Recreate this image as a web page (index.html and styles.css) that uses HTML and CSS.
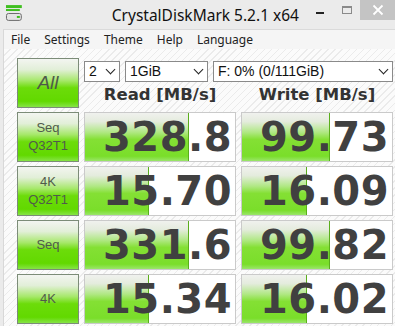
FILE: index.html
```html
<!DOCTYPE html>
<html lang="en">
<head>
    <meta charset="UTF-8">
    <title>CrystalDiskMark 5.2.1 x64</title>
    <link rel="stylesheet" href="styles.css">
</head>
<body>
    <div id="window">
        <div id="title-bar">
            <svg class="app-icon" width="18" height="18" viewBox="0 0 18 18">
                <rect x="1" y="1" width="16" height="3" fill="#3fbf1f"/>
                <rect x="1" y="5" width="14" height="2" fill="#3fbf1f"/>
                <rect x="1.5" y="9.5" width="15" height="7" rx="2" fill="#e4e4e4" stroke="#6b6b6b"/>
                <rect x="12" y="12" width="3" height="2" fill="#3fbf1f"/>
            </svg>
            <div class="title">CrystalDiskMark 5.2.1 x64</div>
            <div class="caption-btn min-btn"><span></span></div>
            <div class="caption-btn max-btn"><span></span></div>
            <div class="caption-btn close-btn">
                <svg width="12" height="12" viewBox="0 0 12 12">
                    <path d="M1.5 1.5 L10.5 10.5 M10.5 1.5 L1.5 10.5" stroke="#fff" stroke-width="1.8"/>
                </svg>
            </div>
        </div>

        <div id="client">
            <div id="menu-bar">
                <span class="menu-item">File</span>
                <span class="menu-item">Settings</span>
                <span class="menu-item">Theme</span>
                <span class="menu-item">Help</span>
                <span class="menu-item">Language</span>
            </div>

            <div id="main">
                <div class="bench-grid">
                    <div class="label-btn all-btn">All</div>
                    <div class="controls">
                        <div class="select-row">
                            <div class="select sel-count">2<i class="chev"></i></div>
                            <div class="select sel-size">1GiB<i class="chev"></i></div>
                            <div class="select sel-drive">F: 0% (0/111GiB)<i class="chev"></i></div>
                        </div>
                        <div class="header-row">
                            <div class="col-head">Read [MB/s]</div>
                            <div class="col-head">Write [MB/s]</div>
                        </div>
                    </div>
                    <!-- rows are filled in by script -->
                </div>
            </div>
        </div>
    </div>

    <script>
        const results = [
            { name: ['Seq', 'Q32T1'], read: '328.8', readBar: 104, write: '99.73', writeBar: 88 },
            { name: ['4K', 'Q32T1'], read: '15.70', readBar: 64, write: '16.09', writeBar: 65 },
            { name: ['Seq'], read: '331.6', readBar: 104, write: '99.82', writeBar: 88 },
            { name: ['4K'], read: '15.34', readBar: 64, write: '16.02', writeBar: 65 }
        ];

        function makeValueBox(text, barWidth) {
            const box = document.createElement('div');
            box.classList.add('value-box');
            const bar = document.createElement('div');
            bar.classList.add('value-bar');
            bar.style.width = barWidth + 'px';
            const num = document.createElement('span');
            num.classList.add('value-text');
            num.textContent = text;
            box.appendChild(bar);
            box.appendChild(num);
            return box;
        }

        function buildRows() {
            const grid = document.querySelector('.bench-grid');
            results.forEach(r => {
                const label = document.createElement('div');
                label.classList.add('label-btn');
                label.innerHTML = r.name.join('<br>');
                grid.appendChild(label);
                grid.appendChild(makeValueBox(r.read, r.readBar));
                grid.appendChild(makeValueBox(r.write, r.writeBar));
            });
        }

        buildRows();
    </script>
</body>
</html>
```

FILE: styles.css
```css
body {
    margin: 0;
    width: 395px;
    height: 326px;
    overflow: hidden;
    font-family: "Noto Sans", "DejaVu Sans", sans-serif;
}
#window {
    height: 100%;
    background-color: #ebebeb;
    display: flex;
    flex-direction: column;
}
#title-bar {
    height: 29px;
    display: flex;
    align-items: flex-start;
    position: relative;
}
.app-icon {
    margin: 4px 0 0 5px;
}
.title {
    font-size: 15.5px;
    color: #111;
    margin: 4px 0 0 89px;
    white-space: nowrap;
}
.caption-btn {
    height: 20px;
    display: flex;
    align-items: center;
    justify-content: center;
}
.min-btn {
    width: 27px;
    margin-left: 8px;
}
.min-btn span {
    display: block;
    width: 8px;
    height: 2px;
    margin-top: 5px;
    background-color: #222;
}
.max-btn {
    width: 27px;
}
.max-btn span {
    display: block;
    width: 8px;
    height: 5px;
    margin-top: -1px;
    border: 1px solid #8a8a8a;
    border-top-width: 2px;
}
.close-btn {
    width: 35px;
    margin-left: auto;
    background-color: #c4c4c4;
}
#client {
    flex: 1;
    margin-left: 3px;
    border-left: 1px solid #d8d8d8;
    border-top: 1px solid #dadada;
    display: flex;
    flex-direction: column;
}
#menu-bar {
    height: 19px;
    background-color: #f5f5f5;
    display: flex;
    align-items: center;
    font-size: 12px;
    color: #222;
    padding-left: 7px;
}
.menu-item {
    margin-right: 14px;
}
#main {
    flex: 1;
    padding: 9px 0 0 13px;
    background-color: #fbfbfb;
    background-image: repeating-linear-gradient(135deg, #fbfbfb 0px, #fbfbfb 4px, #ebebeb 4px, #ebebeb 5px);
}
.bench-grid {
    display: grid;
    grid-template-columns: 62px 152px 152px;
    grid-auto-rows: 50px;
    gap: 4px 5px;
}
.label-btn {
    box-sizing: border-box;
    border: 1px solid #7c8c78;
    background: linear-gradient(to bottom, #f3f5f1 0%, #e2efd8 22%, #a6e86a 45%, #6cdc0a 60%, #62d900 88%, #86e446 100%);
    color: #505a4c;
    font-family: "Liberation Sans", Arial, sans-serif;
    font-size: 13px;
    line-height: 18px;
    display: flex;
    align-items: center;
    justify-content: center;
    text-align: center;
}
.all-btn {
    font-size: 19px;
    font-style: italic;
    color: #4d5a48;
}
.controls {
    grid-column: 2 / 4;
    display: flex;
    flex-direction: column;
}
.select-row {
    display: flex;
    margin-top: 3px;
    height: 21px;
}
.select {
    box-sizing: border-box;
    height: 21px;
    border: 1px solid #8a8a8a;
    background-color: #fff;
    font-family: "Liberation Sans", Arial, sans-serif;
    font-size: 14px;
    line-height: 19px;
    padding-left: 4px;
    color: #111;
    position: relative;
}
.sel-count { width: 36px; }
.sel-size { width: 83px; margin-left: 5px; }
.sel-drive { width: 180px; margin-left: 5px; }
.chev {
    position: absolute;
    right: 5px;
    top: 4px;
    width: 6px;
    height: 6px;
    border-right: 1.5px solid #222;
    border-bottom: 1.5px solid #222;
    transform: rotate(45deg);
}
.header-row {
    display: flex;
    gap: 5px;
    margin-top: 3px;
}
.col-head {
    width: 152px;
    text-align: center;
    font-family: "DejaVu Sans", sans-serif;
    font-weight: bold;
    font-size: 16.5px;
    color: #333;
}
.value-box {
    box-sizing: border-box;
    border: 1px solid #cacaca;
    background-color: #fff;
    position: relative;
    display: flex;
    align-items: center;
    justify-content: flex-end;
    padding-right: 3px;
}
.value-bar {
    position: absolute;
    left: 0;
    top: 0;
    bottom: 0;
    box-sizing: border-box;
    border-right: 1px solid #5aae1c;
    background: linear-gradient(to bottom, #f0f1ee 0%, #e4ecdd 18%, #b0e884 40%, #84e034 55%, #7ade2a 90%, #9ae66a 100%);
}
.value-text {
    position: relative;
    font-family: "DejaVu Sans", sans-serif;
    font-weight: bold;
    font-size: 40px;
    color: #404040;
    letter-spacing: 0.5px;
}
```
